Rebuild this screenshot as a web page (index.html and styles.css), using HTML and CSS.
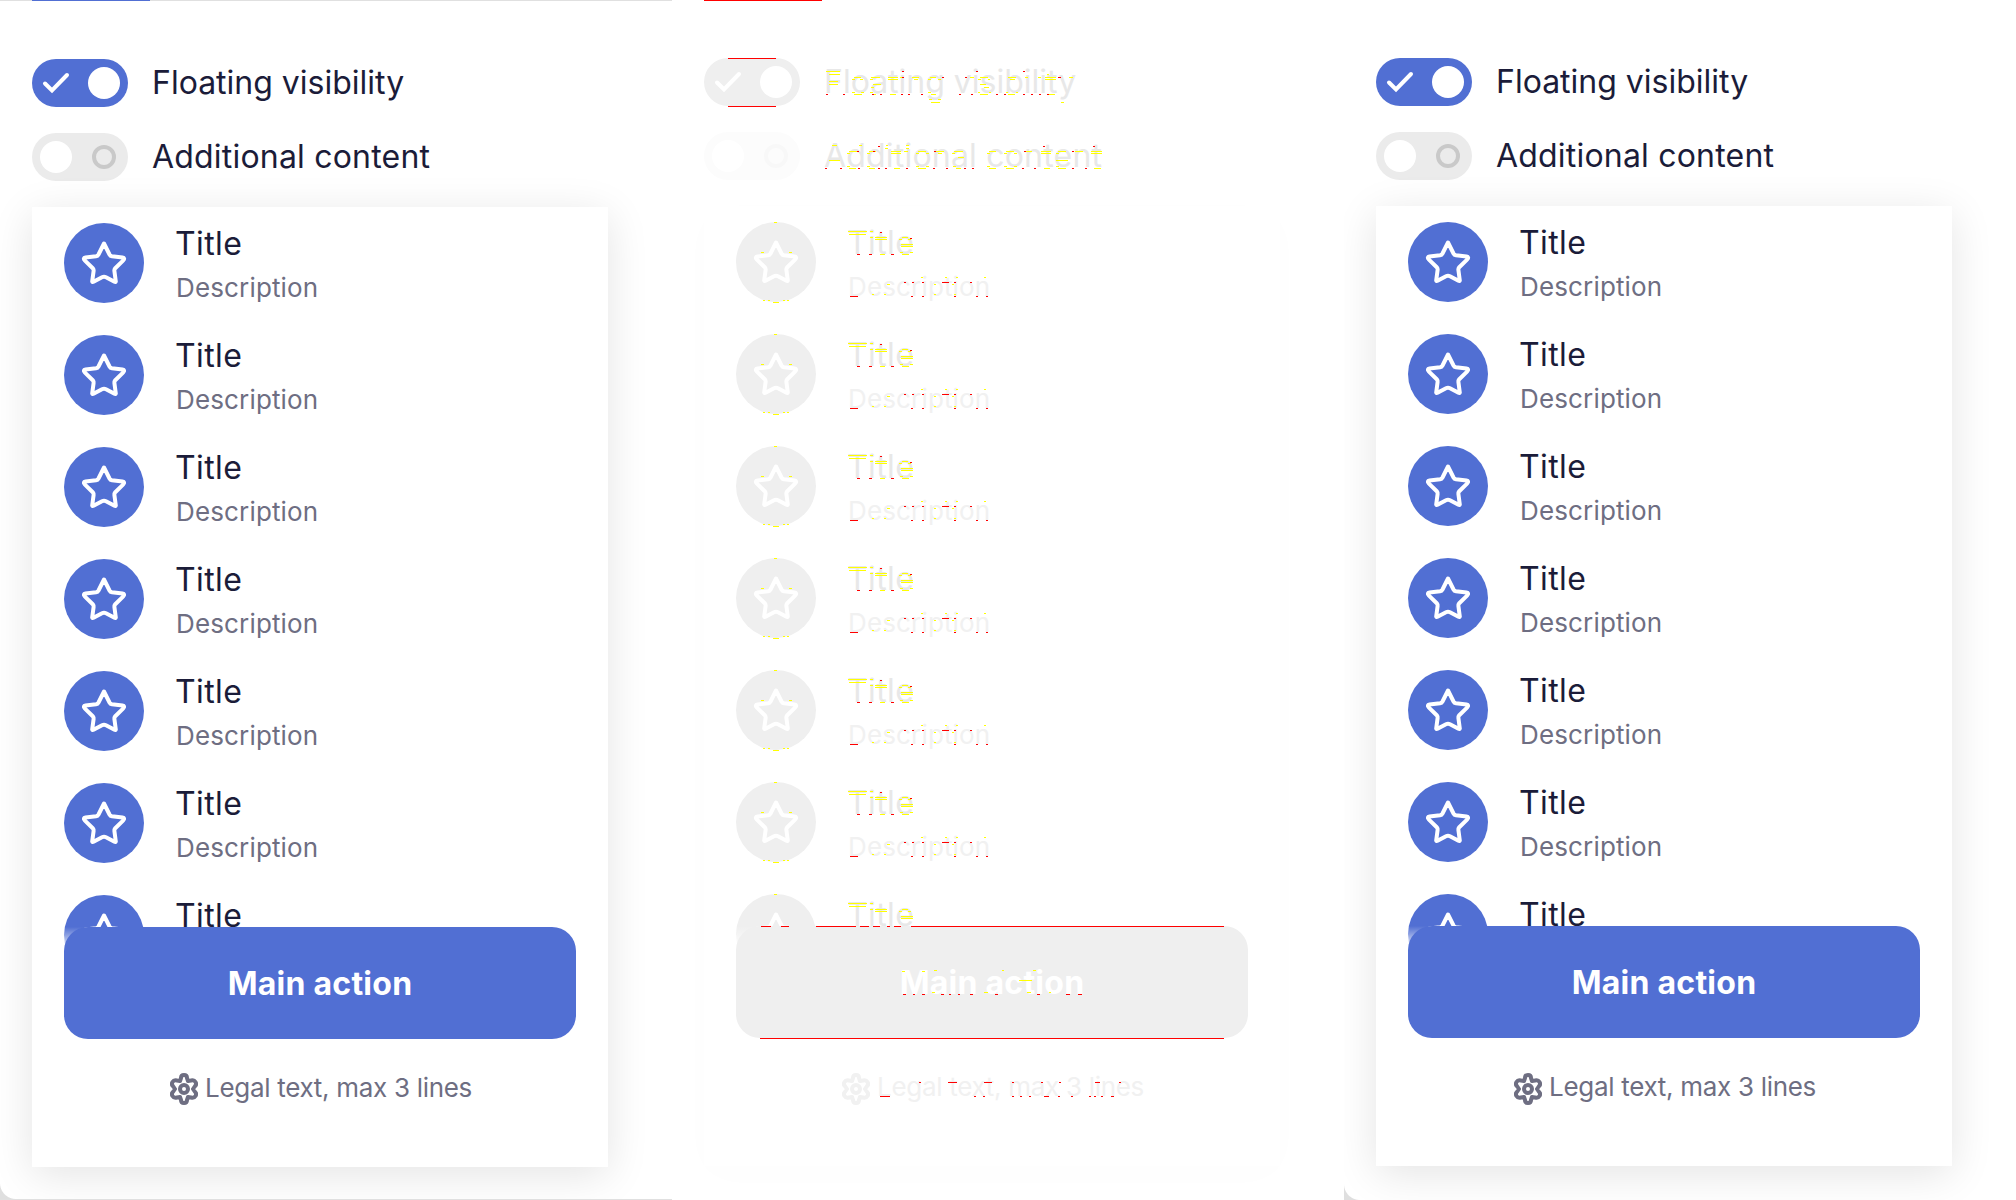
FILE: index.html
```
<!DOCTYPE html>
<html lang="en">
<head>
<meta charset="utf-8">
<title>Fixed footer</title>
<link rel="stylesheet" href="styles.css">
</head>
<body>
<main class="board" id="board"></main>
<svg class="defs" width="0" height="0" aria-hidden="true">
<symbol id="star" viewBox="0 0 48 48"><path d="M24 4.500 L29.500 15.500 Q30.300 17 32 17.300 L42.500 18.500 Q45.300 19 43.300 21.300 L35 29.500 Q34.200 30.500 34.400 32 L35.800 42.500 Q35.500 43.300 34.500 42.800 L26 38.300 Q24 37.300 22 38.300 L13.500 42.800 Q12.500 43.300 12.200 42.500 L13.600 32 Q13.800 30.500 13 29.500 L4.700 21.300 Q2.700 19 5.500 18.500 L16 17.300 Q17.700 17 18.500 15.500 Z" fill="none" stroke="currentColor" stroke-width="4" stroke-linejoin="round"/></symbol>
<symbol id="gear" viewBox="0 0 28 32"><path d="M11 5 Q11 2 14 2 Q17 2 17 5 L18 8 L21 7.500 Q24 6.500 25.500 9 Q27 11.500 24.700 13.500 L23 16 L24.700 18.500 Q27 20.500 25.500 23 Q24 25.500 21 24.500 L18 24 L17 27 Q17 30 14 30 Q11 30 11 27 L10 24 L7 24.500 Q4 25.500 2.500 23 Q1 20.500 3.300 18.500 L5 16 L3.300 13.500 Q1 11.500 2.500 9 Q4 6.500 7 7.500 L10 8 Z" fill="none" stroke="currentColor" stroke-width="4" stroke-linejoin="round"/><circle cx="14" cy="16" r="4" fill="none" stroke="currentColor" stroke-width="4"/></symbol>
</svg>
<script src="app.js"></script>
</body>
</html>
```
FILE: styles.css
```
* { box-sizing: border-box; }
body { margin: 0; background: #fff; font-family: "Inter", "Liberation Sans", sans-serif; }
.defs { display: block; width: 0; height: 0; }
.board { display: grid; grid-template-columns: repeat(3, 672px); height: 1200px; overflow: hidden; }
.panel { --blue: #516fd3; --ink: #1b1c39; --muted: #6e6e82; --off: #ebebeb; --ring: #c9c9c9; --shadow: rgba(0,0,0,.11);
  position: relative; height: 1200px; overflow: hidden; padding: 0 32px; color: var(--ink); }
.panel-before { border-bottom: 1px solid #e0e0e0; }
.panel-diff { --blue: #efefef; --ink: #e8e8e8; --muted: #f1f1f1; --off: #fcfcfc; --ring: #f8f8f8; --shadow: rgba(0,0,0,.012); }
.corner { position: absolute; left: 0; bottom: 0; width: 16px; height: 16px; background: radial-gradient(circle at 100% 0, transparent 15.5px, #dfdfdf 16.5px); }
.tabs { height: 1px; margin: 0 -32px 57px; padding-left: 32px; }
.panel-before .tabs { background: #e0e0e0; margin-bottom: 58px; }
.tab { width: 118px; height: 1px; }
.panel-before .tab { background: var(--blue); }
.panel-diff .tab { background: #f00; }
.setting { display: flex; align-items: center; gap: 24px; height: 48px; margin-bottom: 26px; }
.switch { display: flex; align-items: center; justify-content: space-between; width: 96px; height: 48px; padding: 0 8px; border-radius: 24px; background: var(--off); }
.switch.on { background: var(--blue); }
.switch svg { width: 32px; height: 32px; }
.knob { width: 32px; height: 32px; border-radius: 50%; background: #fff; }
.ring { width: 24px; height: 24px; margin-right: 4px; border: 4px solid var(--ring); border-radius: 50%; }
.label, .title, .desc, .action-text, .legal-text { display: block; white-space: nowrap; }
.label { font-size: 32px; line-height: 50px; }
.label-wide { letter-spacing: .2px; }
.card { position: relative; width: 576px; height: 960px; background: #fff; box-shadow: 0 8px 40px var(--shadow); }
.list { height: 752px; overflow: hidden; padding: 16px 32px 0; }
.item { display: flex; gap: 32px; height: 112px; }
.circle { display: flex; align-items: center; justify-content: center; width: 80px; height: 80px; border-radius: 50%; background: var(--blue); color: #fff; flex: none; }
.circle svg { width: 48px; height: 48px; }
.title { font-size: 32px; line-height: 42px; letter-spacing: .4px; margin-left: -1px; }
.desc { font-size: 26px; line-height: 40px; margin-top: 3px; letter-spacing: .15px; color: var(--muted); }
.footer { position: absolute; left: 0; right: 0; top: 720px; height: 240px; padding: 0 32px; background: linear-gradient(rgba(255,255,255,0), #fff 24px); }
.action { display: flex; align-items: center; justify-content: center; height: 112px; border-radius: 24px; background: var(--blue); color: #fff; }
.action-text { font-size: 32px; font-weight: 700; letter-spacing: .25px; }
.legal { display: flex; align-items: center; height: 40px; margin: 28px 0 0 106px; color: var(--muted); gap: 7px; }
.legal svg { width: 28px; height: 32px; margin-top: 5px; }
.panel-before .legal svg { margin-top: 3px; }
.legal-text { font-size: 26px; letter-spacing: -.3px; }
.marks { position: absolute; left: 0; top: 0; width: 672px; height: 1200px; }
```
FILE: app.js
```
const rows = n => Array.from({ length: n }, (_, i) => `<div class="item"><div class="circle"><svg><use href="#star"/></svg></div><div><span class="title">Title</span>${i < n - 1 ? '<span class="desc">Description</span>' : ''}</div></div>`).join('');

// Changed pixels of the middle panel: each entry is a row y followed by pairs of x start and length.
const runs = (list, dy = 0) => list.map(([y, ...p]) => {
  let d = '';
  for (let i = 0; i < p.length; i += 2) d += `M${p[i]} ${y + dy + .5}h${p[i + 1]}`;
  return d;
}).join('');
const yellow = [
  [71,154,14],[74,157,11,375,2],[81,157,9],[84,157,9,201,8,308,6],
  [77,182,7,199,9,216,10,228,4,240,7,258,6,308,8,298,4,336,8,353,3,366,3,373,11,397,4],
  [79,180,3,188,3,198,3,216,10,242,4,256,3,266,3,306,3,316,2,338,5,373,11],
  [87,199,3,312,5],[92,180,3,189,3,198,3,256,3,306,2,317,2,334,2,344,2],
  [94,182,8,201,3,218,6,259,5,308,8,336,7,376,7],[99,257,3,266,3],[102,259,9,389,3],
  [145,160,5,187,3,214,2,234,3],[148,213,3,234,3],[160,157,11,384,12],[157,286,6],
  [151,177,8,197,7,219,10,232,4,246,8,264,8,282,9,317,7,334,8,352,8,369,10,386,8,403,8,419,11],
  [153,175,3,195,3,219,10,244,3,254,3,266,4,280,3,315,3,332,3,342,3,369,10,384,3,419,11],
  [166,175,3,195,3,244,3,254,3,281,3,315,3,332,3,342,3,384,3],
  [168,177,7,197,6,222,6,246,8,284,5,317,7,334,8,372,6,386,8,422,7],
  [970,262,3,330,2,361,3],[980,347,13],[992,260,3,312,4,355,4,377,2],[971,230,3,250,3]
];
const red = [
  [58,56,48],[106,56,48],[71,230,2,304,2,351,2],[77,230,2,293,2,386,3,270,2],
  [94,154,2,171,2,200,2,208,2,229,2,236,2,249,2,287,2,299,2,324,2,332,2,351,2,359,2,367,2,375,2],
  [146,206,2,371,2,421,2],[151,185,2,201,2,262,2,352,2,400,2],
  [168,153,2,168,2,186,2,206,2,213,2,234,2,261,2,274,2,292,2,300,2,350,2,362,2,400,2,413,2],
  [926,89,10,109,8,144,40,188,9,201,7,215,3,222,7,239,313],[1038,88,464],
  [994,231,3,241,2,250,3,269,3,277,2,286,2,298,3,323,3,365,3,394,4,406,4],
  [1096,208,10,302,2,311,2,340,2,348,2,357,2,372,5,386,2,399,2,417,2,422,2,429,2,439,3],
  [1082,247,2,276,9,312,8,340,2,369,2,387,2,423,5,447,2]
];
const rowYellow = [[222,102,3],[302,101,6],[300,91,2,96,2,111,2,115,2],[252,89,3,117,3],
  [231,176,19,198,3],[234,177,17],[237,198,3,203,12,230,6],[239,203,12,227,3,236,3],[244,229,12],[246,229,12],[252,228,3,238,3],[254,208,5,230,7],
  [284,215,3,262,2,280,2],[294,200,2,212,2,262,2,282,2],[277,249,2,273,2,284,2,312,2]];
const rowRed = [[232,208,2],[254,185,3,197,3,219,3],[238,238,2],
  [282,232,2,240,2,250,2,270,7,282,2,298,2],[296,178,8,239,2,250,2,282,2,304,2,314,2]];
let y = runs(yellow), r = runs(red);
for (let i = 0; i < 6; i++) { y += runs(rowYellow, i * 112); r += runs(rowRed, i * 112); }
y += runs(rowYellow.filter(e => e[0] < 254 && e[0] !== 252), 672);
const marks = `<svg class="marks" viewBox="0 0 672 1200" shape-rendering="crispEdges"><path d="${y}" stroke="#ff0"/><path d="${r}" stroke="#f00"/></svg>`;

const panel = kind => `<section class="panel panel-${kind}">
<div class="tabs"><div class="tab"></div></div>
<div class="setting"><div class="switch on"><svg viewBox="0 0 32 32"><path d="M5 16.500L12 23.500L27 8" fill="none" stroke="#fff" stroke-width="4" stroke-linecap="round"/></svg><span class="knob"></span></div><span class="label">Floating visibility</span></div>
<div class="setting"><div class="switch"><span class="knob"></span><span class="ring"></span></div><span class="label label-wide">Additional content</span></div>
<div class="card"><div class="list">${rows(7)}</div><div class="footer"><div class="action"><span class="action-text">Main action</span></div><div class="legal"><svg><use href="#gear"/></svg><span class="legal-text">Legal text, max 3 lines</span></div></div></div>
${kind === 'diff' ? marks : '<div class="corner"></div>'}</section>`;
document.getElementById('board').innerHTML = ['before', 'diff', 'after'].map(panel).join('');
```
